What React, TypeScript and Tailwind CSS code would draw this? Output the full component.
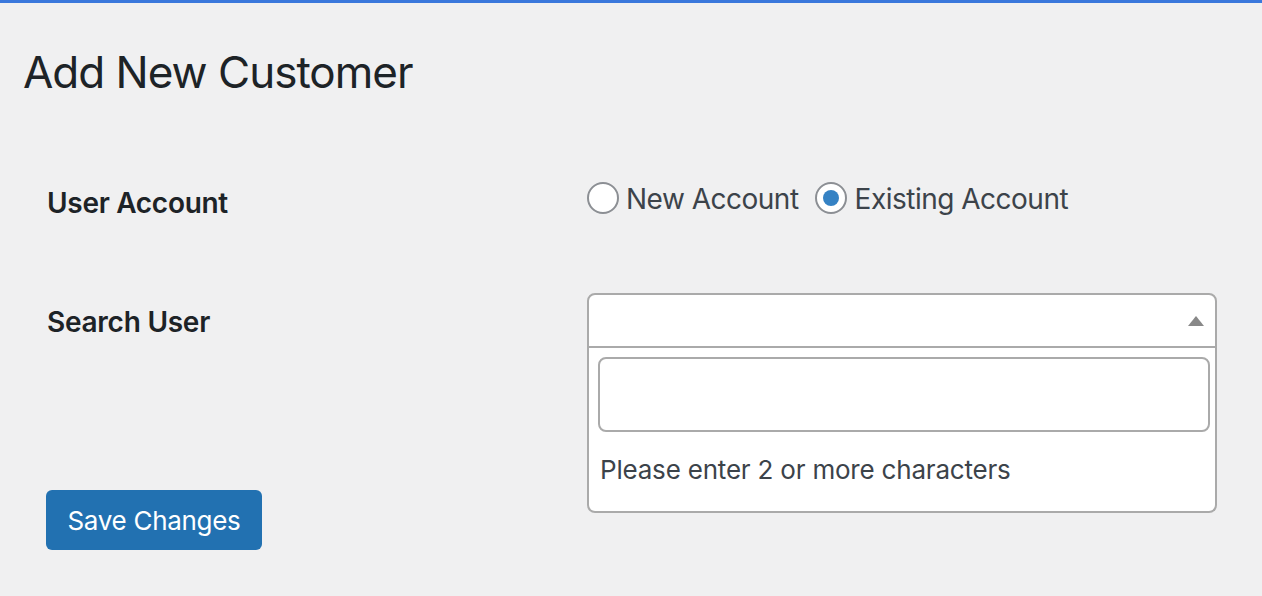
import React from "react";

function Radio({ checked }: { checked?: boolean }) {
  return (
    <span className="flex h-[32px] w-[32px] shrink-0 items-center justify-center rounded-full border-2 border-[#8c8f94] bg-white">
      {checked && <span className="block h-[16px] w-[16px] rounded-full bg-[#3582c4]" />}
    </span>
  );
}

export default function App() {
  return (
    <div
      className="min-h-screen border-t-[3px] border-[#3a78dc] bg-[#f0f0f1] text-[#1d2327]"
      style={{ fontFamily: "Inter, 'Noto Sans', sans-serif" }}
    >
      <h1 className="pl-[23px] pt-[41px] text-[44px] font-normal leading-[56px] tracking-[-1px] text-[#1d2327]">
        Add New Customer
      </h1>

      <div className="mt-[81px] flex items-start pl-[47px]">
        <div className="w-[540px] pt-[5px] text-[28px] font-semibold leading-[34px] tracking-[-0.3px] text-[#1d2327]">
          User Account
        </div>
        <div className="flex h-[34px] items-center text-[28px] leading-[34px] tracking-[-0.5px] text-[#3c434a]">
          <Radio />
          <span className="relative top-[1px] ml-[7px]">New Account</span>
          <span className="ml-[16px]">
            <Radio checked />
          </span>
          <span className="relative top-[1px] ml-[8px]">Existing Account</span>
        </div>
      </div>

      <div className="mt-[73px] flex items-start pl-[47px]">
        <div className="w-[540px] pt-[12px] text-[28px] font-semibold leading-[34px] tracking-[-0.25px] text-[#1d2327]">
          Search User
        </div>
        <div className="relative w-[630px]">
          <div className="relative h-[55px] rounded-t-[8px] border-2 border-[#aaaaaa] bg-white">
            <svg
              className="absolute right-[11px] top-[21px]"
              width="16"
              height="10"
              viewBox="0 0 16 10"
            >
              <polygon points="8,0 16,10 0,10" fill="#888888" />
            </svg>
          </div>
          <div className="absolute left-0 top-full w-[630px] rounded-b-[8px] border-2 border-t-0 border-[#aaaaaa] bg-white pb-[23px] pl-[9px] pr-[5px] pt-[9px]">
            <div className="h-[75px] rounded-[8px] border-2 border-[#aaaaaa] bg-white" />
            <div className="mt-[20px] pl-[2px] text-[26px] leading-[36px] tracking-[-0.2px] text-[#3c434a]">
              Please enter 2 or more characters
            </div>
          </div>
        </div>
      </div>

      <button className="ml-[46px] mt-[142px] flex h-[60px] w-[216px] items-center justify-center rounded-[6px] bg-[#2271b1] text-[26px] tracking-[-0.3px] text-white">
        Save Changes
      </button>
    </div>
  );
}
